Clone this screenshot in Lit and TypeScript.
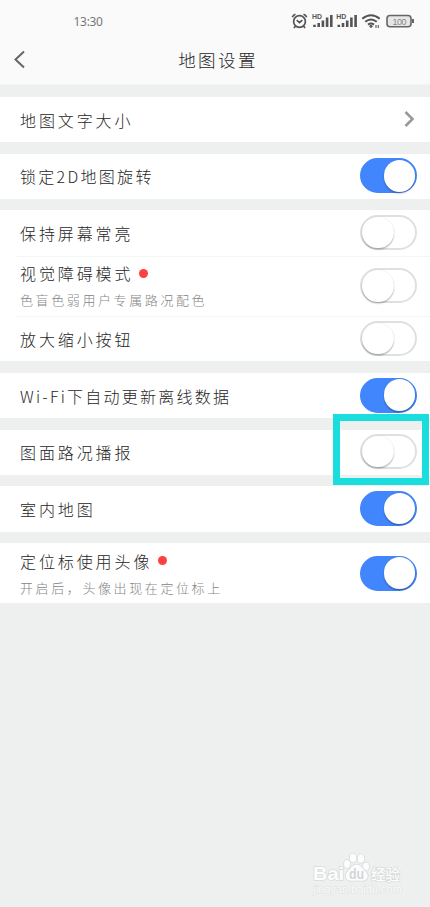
import { LitElement, html, css, svg, nothing } from "lit";
import { customElement, property } from "lit/decorators.js";
import { classMap } from "lit/directives/class-map.js";

interface Row {
  label: string;
  sub?: string;
  dot?: boolean;
  on?: boolean;
  link?: boolean;
  spacing?: number;
  size?: "tall" | "mid";
}

const GROUPS: Row[][] = [
  [{ label: "地图文字大小", link: true }],
  [{ label: "锁定2D地图旋转", on: true, spacing: 2.3 }],
  [
    { label: "保持屏幕常亮", on: false },
    { label: "视觉障碍模式", sub: "色盲色弱用户专属路况配色", dot: true, on: false, size: "tall" },
    { label: "放大缩小按钮", on: false },
  ],
  [{ label: "Wi-Fi下自动更新离线数据", on: true, spacing: 2.25 }],
  [{ label: "图面路况播报", on: false }],
  [{ label: "室内地图", on: true }],
  [{ label: "定位标使用头像", sub: "开启后，头像出现在定位标上", dot: true, on: true, size: "tall" }],
];

@customElement("toggle-switch")
export class ToggleSwitch extends LitElement {
  static styles = css`
    :host { display: block; flex: none; }
    .track {
      box-sizing: border-box; width: 57px; height: 35px; border-radius: 18px;
      border: 2px solid #e0e0e0; background: #fff; display: flex; align-items: center;
    }
    .knob {
      width: 31.500px; height: 31.500px; border-radius: 50%; background: #fff; flex: none;
      box-shadow: 0 1.5px 1.5px rgba(0, 0, 0, 0.26), 0 0 1px rgba(0, 0, 0, 0.15);
    }
    .on { background: #4186fd; border-color: #4186fd; justify-content: flex-end; }
  `;
  @property({ type: Boolean }) on = false;
  render() {
    return html`<div class=${classMap({ track: true, on: this.on })}><div class="knob"></div></div>`;
  }
}

const signal = (x: number) => svg`
  <text x=${x} y="18.5" class="hd" textLength="10" lengthAdjust="spacingAndGlyphs">HD</text>
  <path d="M${x + 2.5} 27v-2.2M${x + 6.700} 27v-4M${x + 10.900} 27v-6.500M${x + 15.100} 27v-9.500M${x + 19.300} 27v-12"
    stroke="#555" stroke-width="2.6" fill="none"/>`;

@customElement("app-root")
export class AppRoot extends LitElement {
  static styles = css`
    :host {
      display: block; position: relative; width: 430px; height: 907px; overflow: hidden;
      background: #eef0f0; color: #262626;
      font-family: "Noto Sans CJK SC", sans-serif; font-weight: 300;
    }
    header { box-sizing: border-box; height: 85px; background: #fafafa; border-bottom: 1px solid #f3f4f4; margin-bottom: 12px; }
    .status { height: 42px; display: flex; justify-content: space-between; }
    .time { padding: 13px 0 0 73.500px; font: 12px/17px "Noto Sans", sans-serif; color: #777; letter-spacing: -0.3px; }
    .icons { display: block; }
    .hd { font: bold 6.5px "Liberation Sans", sans-serif; fill: #555; }
    .pct { font: 9px "Liberation Sans", sans-serif; fill: #888; }
    .nav { display: grid; grid-template-columns: 60px 1fr 60px; height: 34px; align-items: center; }
    .back { display: block; margin-left: 12px; }
    .title { font-size: 17.5px; letter-spacing: 2.4px; text-align: center; padding-left: 6px; }
    main { display: flex; flex-direction: column; gap: 11.4px; }
    .group { background: #fff; }
    .row { box-sizing: border-box; height: 45.3px; display: flex; align-items: center; justify-content: space-between; padding: 0 13px 1px 20px; }
    .row.tall { height: 60.5px; padding-bottom: 0; }
    .row + .row { position: relative; }
    .row + .row::before { content: ""; position: absolute; top: 0; left: 17px; right: 0; height: 1px; background: #f3f4f4; }
    .text { padding-top: 1px; }
    .tall .text { padding-top: 0; }
    .label { font-size: 16px; line-height: 22px; letter-spacing: 2.9px; display: flex; align-items: center; white-space: nowrap; }
    .dot { width: 9px; height: 9px; border-radius: 50%; background: #fd4141; margin-left: 5.500px; }
    .sub { font-size: 13px; line-height: 18px; letter-spacing: 2.6px; margin-top: 7px; color: #858585; white-space: nowrap; }
    .more { display: block; }
    .mark { position: absolute; box-sizing: border-box; left: 333px; top: 414px; width: 96px; height: 71px; border: 7px solid #1adedd; }
    .watermark { position: absolute; left: 308px; top: 848px; }
    .wm { fill: #fcfdfd; stroke: #d9dcdc; stroke-width: 1.6px; paint-order: stroke; }
    .logo { font: bold 19px "Liberation Sans", sans-serif; }
    .du { font: bold 14px "Liberation Sans", sans-serif; fill: #d3d6d6; }
    .cn { font: 500 14.5px "Noto Sans CJK SC", sans-serif; }
    .url { font: 10.500px "Liberation Sans", sans-serif; fill: #fafbfb; stroke: #dfe2e2; stroke-width: 1px; paint-order: stroke; }
  `;

  private row(r: Row) {
    return html`<div class=${classMap({ row: true, tall: r.size === "tall" })}>
      <div class="text">
        <div class="label" style=${r.spacing ? `letter-spacing:${r.spacing}px` : nothing}>
          <span>${r.label}</span>${r.dot ? html`<i class="dot"></i>` : nothing}
        </div>
        ${r.sub ? html`<div class="sub">${r.sub}</div>` : nothing}
      </div>
      ${r.link
        ? html`<svg class="more" width="16" height="20" viewBox="0 0 16 20"><path d="M4.500 3l7 7-7 7" fill="none" stroke="#999" stroke-width="2.6"/></svg>`
        : html`<toggle-switch ?on=${r.on}></toggle-switch>`}
    </div>`;
  }

  render() {
    return html`
      <header>
        <div class="status">
          <div class="time">13:30</div>
          <svg class="icons" width="140" height="42" viewBox="290 0 140 42">
            <g fill="none" stroke="#555" stroke-width="1.7">
              <circle cx="299.5" cy="21.5" r="5.9"/>
              <path d="M296.7 20.2l2.8 2.4 2.8-2.4M292.3 17.2q.8-2.2 3.2-3M306.7 17.2q-.8-2.2-3.2-3M295.5 26l-1.5 2M303.5 26l1.5 2"/>
            </g>
            ${signal(312)}${signal(336.3)}
            <g fill="none" stroke="#555" stroke-width="2">
              <path d="M362.3 18.7q8.7-7 17.4 0M365.2 21.8q5.8-4.6 11.6 0M368 24.6q3-2.3 6 0"/>
            </g>
            <circle cx="371" cy="26.3" r="1.5" fill="#555"/>
            <path d="M376 28v-3M378.3 28v-3" stroke="#666" stroke-width="1.2"/>
            <rect x="387" y="15.500" width="24" height="11.200" rx="3" fill="#e6e6e6" stroke="#666" stroke-width="1.6"/>
            <path d="M413 19v4" stroke="#666" stroke-width="2"/>
            <text x="392.500" y="24.6" class="pct" textLength="14">100</text>
          </svg>
        </div>
        <div class="nav">
          <svg class="back" width="16" height="20" viewBox="0 0 16 20"><path d="M12 2.500l-8.500 8 8.500 8" fill="none" stroke="#666" stroke-width="2"/></svg>
          <div class="title">地图设置</div>
        </div>
      </header>
      <main>${GROUPS.map((g) => html`<section class="group">${g.map((r) => this.row(r))}</section>`)}</main>
      <div class="mark"></div>
      <svg class="watermark" width="100" height="50" viewBox="308 848 100 50">
        <text x="313" y="880" class="wm logo" textLength="31" lengthAdjust="spacingAndGlyphs">Bai</text>
        <g class="wm">
          <ellipse cx="347" cy="864" rx="3" ry="4"/>
          <ellipse cx="353" cy="858" rx="3.2" ry="4.3"/>
          <ellipse cx="361" cy="858.5" rx="3.2" ry="4.3"/>
          <ellipse cx="366" cy="866.5" rx="3" ry="4"/>
          <path d="M356.500 864.5c4 0 5.500 4 8.500 6.500c5.500 5 2 10.500-4.500 9.800q-4-.6-8 0c-6.500 .7-9-5-4.500-9.800c3-2.500 4.500-6.500 8.500-6.500z"/>
        </g>
        <text x="349" y="879" class="du" textLength="15" lengthAdjust="spacingAndGlyphs">du</text>
        <text x="371" y="879.5" class="wm cn">经验</text>
        <text x="313.5" y="893" class="url" textLength="88" lengthAdjust="spacingAndGlyphs">jingyan.baidu.com</text>
      </svg>`;
  }
}
